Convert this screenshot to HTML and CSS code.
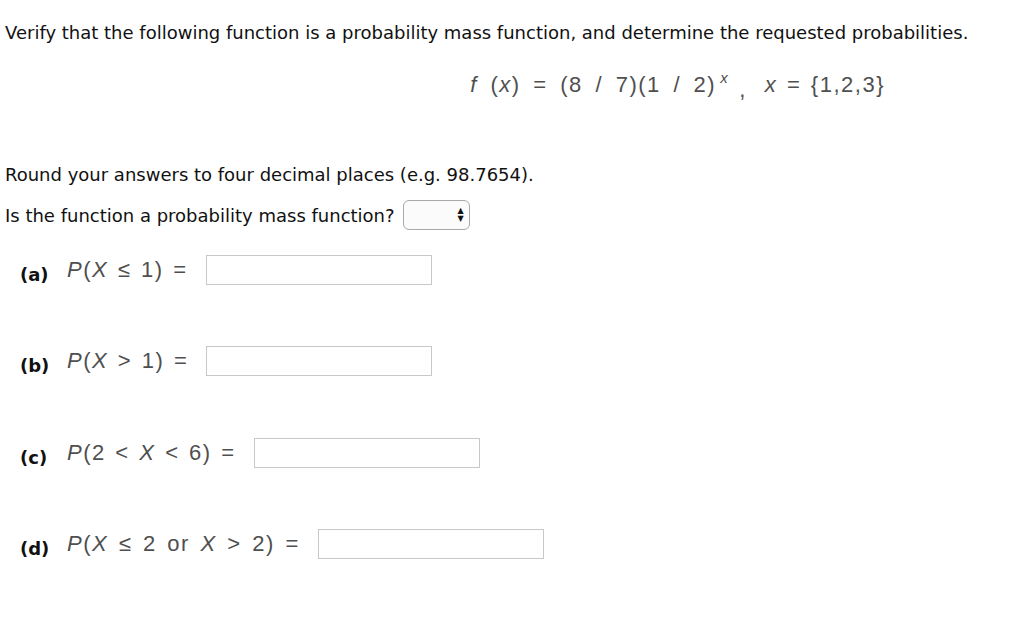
FILE: index.html
```html
<!DOCTYPE html>
<html>
<head>
<meta charset="utf-8">
<link rel="stylesheet" href="styles.css">
</head>
<body>
<div class="page">
  <p class="intro">Verify that the following function is a probability mass function, and determine the requested probabilities.</p>
  <div class="formula-row">
    <span class="math fx"><i>f</i> (<i>x</i>) = (8 / 7)(1 / 2)<sup><i>x</i></sup></span>
    <span class="math comma">,</span>
    <span class="math"><i>x</i> = {1,2,3}</span>
  </div>
  <p class="round">Round your answers to four decimal places (e.g. 98.7654).</p>
  <div class="question">
    <span>Is the function a probability mass function?</span>
    <span class="select"><span class="arrows">▲<br>▼</span></span>
  </div>
  <div class="part part-a">
    <span class="label">(a)</span>
    <span class="math expr"><i>P</i>(<i>X</i> ≤ 1) =</span>
    <span class="answer"></span>
  </div>
  <div class="part part-b">
    <span class="label">(b)</span>
    <span class="math expr"><i>P</i>(<i>X</i> &gt; 1) =</span>
    <span class="answer"></span>
  </div>
  <div class="part part-c">
    <span class="label">(c)</span>
    <span class="math expr"><i>P</i>(2 &lt; <i>X</i> &lt; 6) =</span>
    <span class="answer"></span>
  </div>
  <div class="part part-d">
    <span class="label">(d)</span>
    <span class="math expr wide"><i>P</i>(<i>X</i> ≤ 2 or <i>X</i> &gt; 2) =</span>
    <span class="answer"></span>
  </div>
</div>
</body>
</html>
```
FILE: styles.css
```css
html, body {
  margin: 0;
  padding: 0;
  background: #ffffff;
}
body {
  font-family: "DejaVu Sans", Verdana, sans-serif;
  font-size: 18px;
  color: #111;
}
.page {
  padding: 0 5px;
}
.intro {
  margin: 0;
  padding-top: 22px;
  line-height: 22px;
}
.formula-row {
  display: flex;
  align-items: baseline;
  justify-content: flex-end;
  padding-right: 134px;
  margin-top: 29px;
  height: 24px;
  line-height: 24px;
}
.math {
  font-family: "Liberation Sans", Arial, sans-serif;
  font-size: 22px;
  color: #4f4f4f;
  letter-spacing: 1.5px;
  word-spacing: 2px;
}
.fx {
  word-spacing: 5px;
}
.math i {
  font-style: italic;
}
.math sup {
  font-size: 15px;
  vertical-align: 9px;
  margin-left: 4px;
  line-height: 0;
}
.comma {
  margin: 0 18px 0 10px;
  position: relative;
  top: 5px;
}
.round {
  margin: 0;
  margin-top: 67px;
  line-height: 22px;
}
.question {
  display: flex;
  align-items: center;
  gap: 8px;
  margin-top: 14px;
  height: 30px;
}
.select {
  display: inline-flex;
  justify-content: flex-end;
  align-items: center;
  box-sizing: border-box;
  width: 67px;
  height: 30px;
  border: 1px solid #a9a9a9;
  border-radius: 6px;
  padding-right: 5px;
  background: #fbfbfb;
}
.arrows {
  font-size: 8px;
  line-height: 8px;
  color: #111;
  text-align: center;
}
.part {
  display: flex;
  align-items: center;
  height: 30px;
}
.label {
  font-weight: bold;
  font-size: 18px;
  width: 47px;
  padding-left: 15px;
  position: relative;
  top: 4px;
}
.expr {
  margin-right: 18px;
}
.expr.wide {
  word-spacing: 3px;
}
.answer {
  display: inline-block;
  box-sizing: border-box;
  width: 226px;
  height: 30px;
  border: 1px solid #c8c8c8;
  background: #fff;
}
.part-a { margin-top: 25px; }
.part-b { margin-top: 61px; }
.part-c { margin-top: 62px; }
.part-d { margin-top: 61px; }
```
